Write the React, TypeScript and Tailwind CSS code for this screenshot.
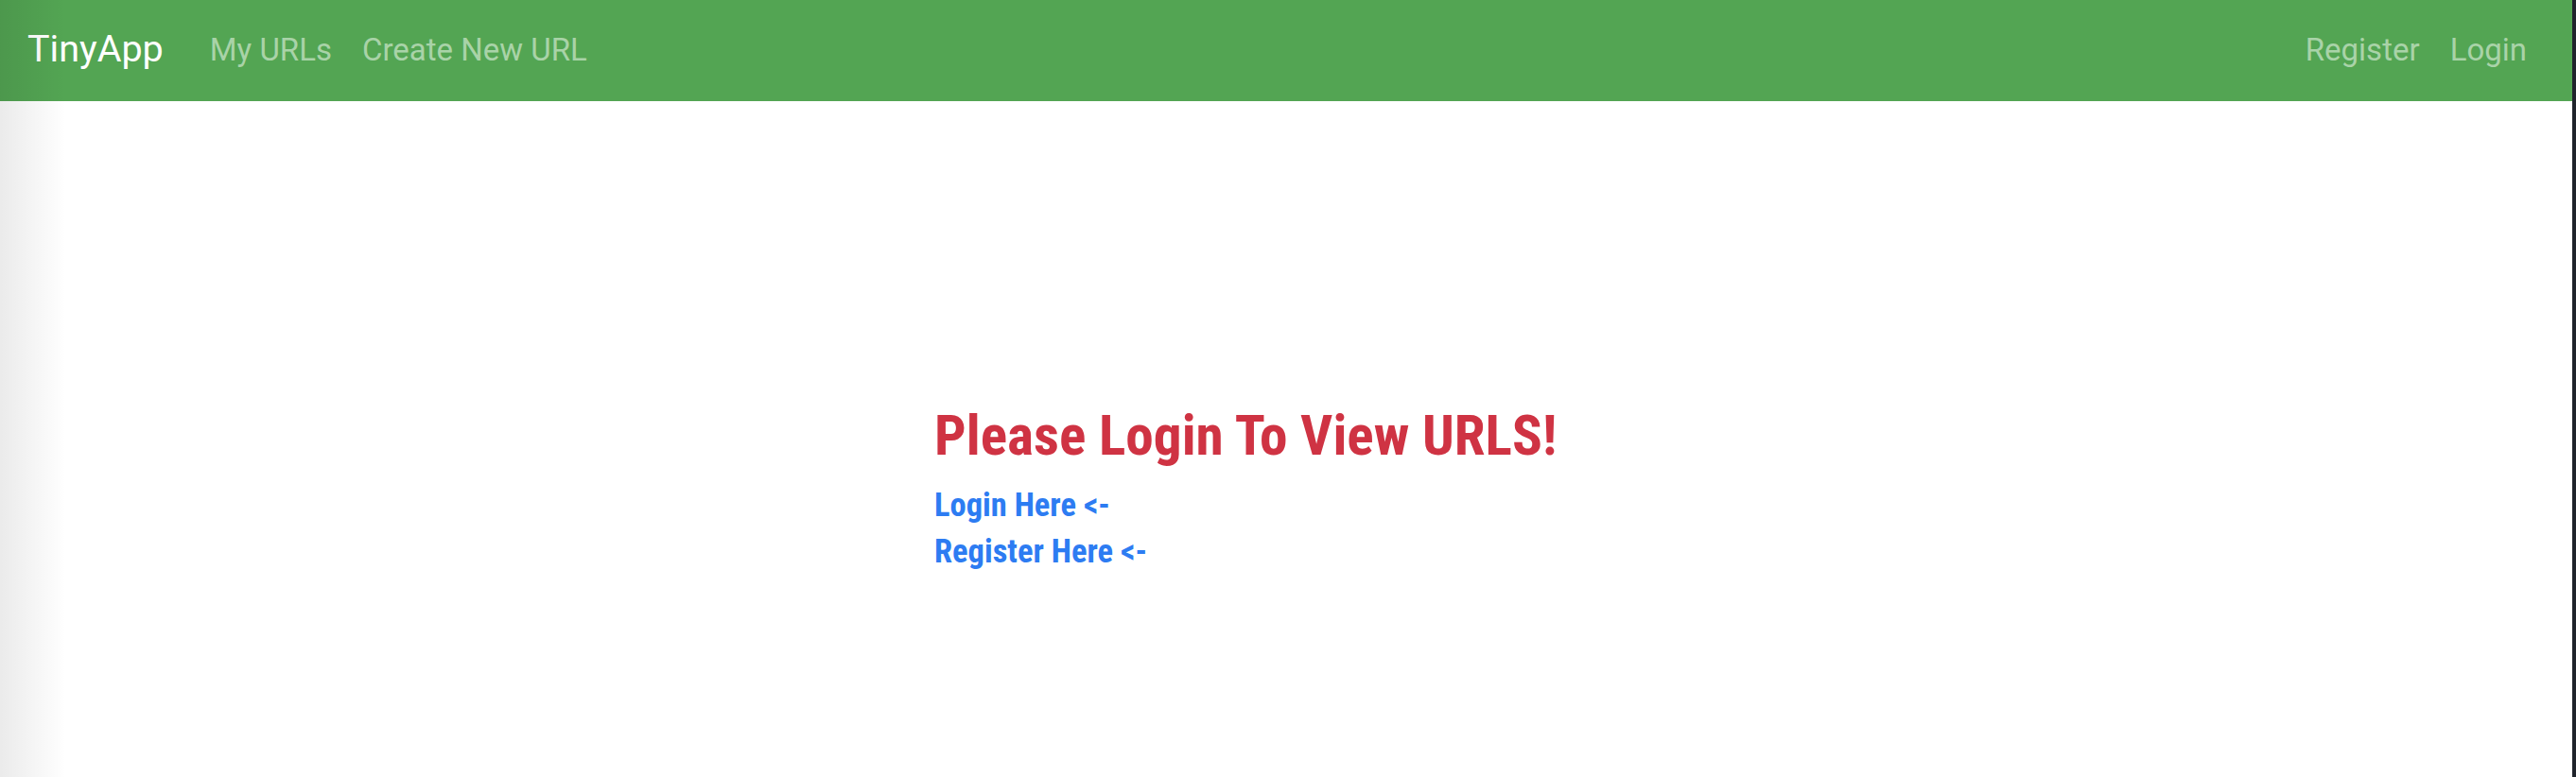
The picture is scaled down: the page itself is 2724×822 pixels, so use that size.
import React from 'react';

const navLink = 'text-[33px] text-[#a9d3a8] leading-none';

const App: React.FC = () => {
  return (
    <div className="min-h-screen flex bg-white" style={{ fontFamily: 'Roboto, "Liberation Sans", sans-serif' }}>
      <div className="relative flex-1 flex flex-col">
        <nav className="h-[107px] bg-[#53a553] flex items-center justify-between pl-[29px] pr-[48px] pb-[3px]">
          <div className="flex items-center">
            <a className="text-[39.5px] text-white leading-none">TinyApp</a>
            <div className="ml-[49px] flex items-center gap-[32px]">
              <a className={navLink}>My URLs</a>
              <a className={navLink}>Create New URL</a>
            </div>
          </div>
          <div className="flex items-center gap-[32px]">
            <a className={navLink}>Register</a>
            <a className={navLink}>Login</a>
          </div>
        </nav>

        <main className="flex-1 pt-[318px] pl-[988px] font-stretch-condensed">
          <h3 className="text-[59.3px] leading-[1.2] font-bold text-[#cf3343]">Please Login To View URLS!</h3>
          <div className="mt-[14px] flex flex-col text-[34.5px] leading-[49px] font-bold text-[#2d7cf2]">
            <a>Login Here &lt;-</a>
            <a>Register Here &lt;-</a>
          </div>
        </main>

        {/* window edge shading */}
        <div className="pointer-events-none absolute inset-y-0 left-0 w-[70px] bg-gradient-to-r from-black/[0.08] to-transparent" />
      </div>
      <div className="w-[4px] bg-[#20242c]" />
    </div>
  );
};

export default App;
